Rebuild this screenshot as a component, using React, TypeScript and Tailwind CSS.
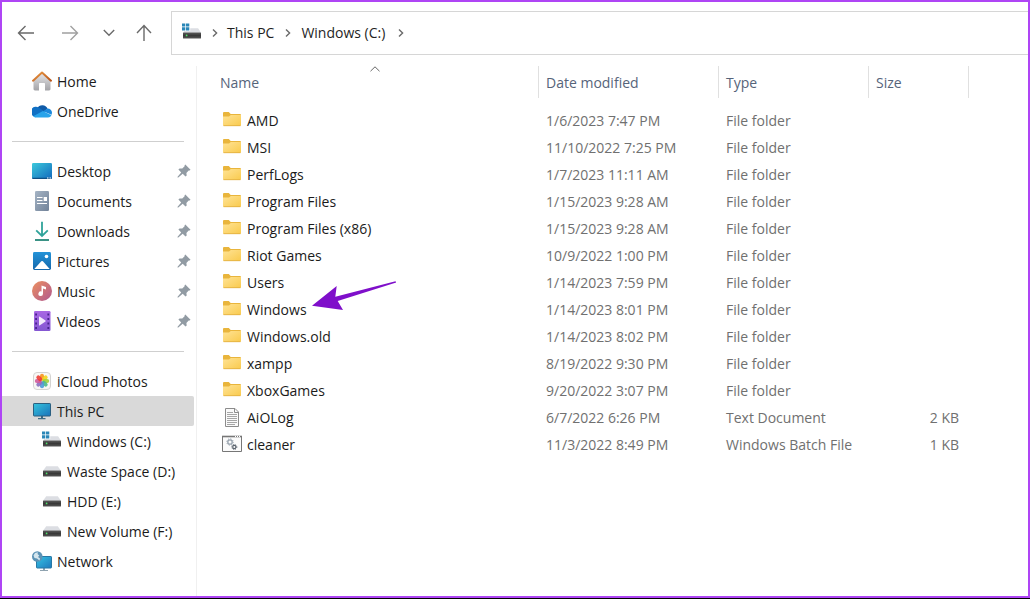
import { useState } from 'react'
import type { ReactNode } from 'react'

function DriveIcon({ system = false }: { system?: boolean }) {
  return (
    <svg width="20" height="20" viewBox="0 0 20 20" className="shrink-0">
      <defs>
        <linearGradient id="drive" x1="0" y1="0" x2="0" y2="1">
          <stop offset="0" stopColor="#5a5a5a" />
          <stop offset="0.5" stopColor="#383838" />
          <stop offset="1" stopColor="#565656" />
        </linearGradient>
      </defs>
      {system ? (
        <>
          <path d="M8.2 5.2h7.9l3 4.600H1L2.200 8h6z" fill="#dcdee3" />
          <path d="M0 .4h3.300v3.200H0zM4 .4h3.300v3.200H4zM0 4.300h3.300v3.200H0zM4 4.300h3.300v3.200H4z" fill="#2a87b8" />
        </>
      ) : (
        <path d="M4.200 5.200h11.600l3.200 4.600H1z" fill="#dcdee3" />
      )}
      <rect x="1" y="9.600" width="18" height="5.900" rx="0.500" fill="url(#drive)" />
      <circle cx="4.600" cy="12.400" r="0.900" fill="#4fe06a" />
    </svg>
  )
}

function HomeIcon() {
  return (
    <svg width="20" height="20" viewBox="0 0 20 20">
      <defs>
        <linearGradient id="house" x1="0" y1="0" x2="0" y2="1">
          <stop offset="0" stopColor="#e6e6e8" />
          <stop offset="1" stopColor="#a3a3a7" />
        </linearGradient>
        <linearGradient id="roof" x1="0" y1="0" x2="1" y2="1">
          <stop offset="0" stopColor="#eb9a45" />
          <stop offset="1" stopColor="#b85418" />
        </linearGradient>
      </defs>
      <path d="M1.500 9.300 10 2l8.500 7.300v8.500c0 .9-.5 1.700-1.500 1.700h-4V13c0-.6-.4-1-1-1H8c-.6 0-1 .4-1 1v6.500H3c-1 0-1.500-.8-1.500-1.700z" fill="url(#house)" />
      <path d="M1 9.700 10 1.500l9 8.200" fill="none" stroke="url(#roof)" strokeWidth="2" strokeLinecap="round" strokeLinejoin="round" />
    </svg>
  )
}

function OneDriveIcon() {
  return (
    <svg width="20" height="20" viewBox="0 0 20 20">
      <path d="M5.200 7.300A5.800 5.800 0 0 1 15.600 7.600L11 11.500z" fill="#0f5ba8" />
      <path d="M.8 14.800A4.200 4.200 0 0 1 6.900 6.700L13 10.800 3.800 16.300A4 4 0 0 1 .8 14.800z" fill="#1070c4" />
      <path d="M11.200 10.200l4.300-2.700c2.500 0 4.500 1.900 4.500 4.300l-.4 2z" fill="#1a88dc" />
      <path d="M1.200 15.200l9.700-5.200 8.600 4.200a3.900 3.900 0 0 1-3.600 2.200H4a3.900 3.900 0 0 1-2.800-1.200z" fill="#28a3ea" />
    </svg>
  )
}

function DesktopIcon() {
  return (
    <svg width="20" height="20" viewBox="0 0 20 20">
      <defs>
        <linearGradient id="desk" x1="0" y1="0" x2="1" y2="1">
          <stop offset="0" stopColor="#3cc9dc" />
          <stop offset="1" stopColor="#1269bd" />
        </linearGradient>
      </defs>
      <rect y="2" width="20" height="16" rx="1.200" fill="url(#desk)" />
      <path d="M.2 16.800h19.600v.2q0 1-1 1H1.200q-1 0-1-1z" fill="#0f4f83" />
      <path d="M15 17h1.500M17.500 17H19" stroke="#fff" />
    </svg>
  )
}

function DocumentsIcon() {
  return (
    <svg width="20" height="20" viewBox="0 0 20 20">
      <defs>
        <linearGradient id="docs" x1="0" y1="0" x2="1" y2="1">
          <stop offset="0" stopColor="#a5b4c5" />
          <stop offset="1" stopColor="#718298" />
        </linearGradient>
      </defs>
      <rect x="3" width="14" height="20" rx="1.300" fill="url(#docs)" />
      <path d="M5 6.500h5.500M5 9.500h5.500M5 12.500h10" stroke="#fff" strokeWidth="1.200" />
      <path d="M11.700 6H15v4h-3.300z" fill="#fff" />
    </svg>
  )
}

function DownloadsIcon() {
  return (
    <svg width="20" height="20" viewBox="0 0 20 20" fill="none" stroke="#2fa39a" strokeWidth="1.800">
      <path d="M10 .8v14M4.200 9.300 10 15l5.800-5.700" />
      <path d="M3 19h14" stroke="#248678" />
    </svg>
  )
}

function PicturesIcon() {
  return (
    <svg width="20" height="20" viewBox="0 0 20 20">
      <defs>
        <linearGradient id="pics" x1="0" y1="0" x2="0" y2="1">
          <stop offset="0" stopColor="#2493d8" />
          <stop offset="1" stopColor="#1467ab" />
        </linearGradient>
      </defs>
      <rect x="1" y="1" width="18" height="18" rx="1.400" fill="url(#pics)" />
      <circle cx="14.500" cy="5.500" r="1.800" fill="#fff" />
      <path d="M2.300 18 9.300 10.300q.8-.8 1.600 0L17.700 18z" fill="#fff" />
    </svg>
  )
}

function MusicIcon() {
  return (
    <svg width="20" height="20" viewBox="0 0 20 20">
      <defs>
        <linearGradient id="music" x1="0" y1="0" x2="1" y2="1">
          <stop offset="0" stopColor="#ec9060" />
          <stop offset="1" stopColor="#b0588f" />
        </linearGradient>
      </defs>
      <circle cx="10" cy="10" r="10" fill="url(#music)" />
      <path d="M9.500 4.500 14 6v2.500l-3-.9v5.200a2.300 2.300 0 1 1-1.500-2.200z" fill="#fff" />
    </svg>
  )
}

function VideosIcon() {
  return (
    <svg width="20" height="20" viewBox="0 0 20 20">
      <defs>
        <linearGradient id="video" x1="0" y1="0" x2="0" y2="1">
          <stop offset="0" stopColor="#a866e4" />
          <stop offset="1" stopColor="#8457d2" />
        </linearGradient>
      </defs>
      <rect x="2" width="16.500" height="20" rx="1.300" fill="url(#video)" />
      <path d="M4.100 2.500v16M16.300 2.500v16" stroke="#4a2390" strokeWidth="1.800" strokeDasharray="2 2.500" />
      <path d="M7 5.800v8.400q0 .5.500.3l6-4q.4-.5 0-.9l-6-4Q7 5.300 7 5.800z" fill="#f3eafc" />
    </svg>
  )
}

const petals = ['#f7941d', '#f2d21b', '#a5cf3a', '#4cb88c', '#4d9bd8', '#8a6fc0', '#cf5a9c', '#ee3d35']

function PhotosIcon() {
  return (
    <svg width="20" height="20" viewBox="0 0 20 20">
      <rect x="1.500" y="1.500" width="17" height="17" rx="3.500" fill="#f8f7f5" stroke="#d4d3d1" />
      {petals.map((color, i) => (
        <rect key={color} x="8" y="2.800" width="4" height="6.700" rx="2" fill={color} opacity="0.9" transform={`rotate(${i * 45} 10 10)`} />
      ))}
    </svg>
  )
}

function ComputerIcon() {
  return (
    <svg width="20" height="20" viewBox="0 0 20 20">
      <defs>
        <linearGradient id="screen" x1="0" y1="0" x2="1" y2="1">
          <stop offset="0" stopColor="#35c4dd" />
          <stop offset="1" stopColor="#1a72ba" />
        </linearGradient>
      </defs>
      <path d="M9 15h2v2h2.500v1.200H6V17h3z" fill="#3e6b84" />
      <rect x="1.500" y="2.500" width="17" height="12.500" rx="0.600" fill="url(#screen)" stroke="#2b5f80" />
    </svg>
  )
}

function NetworkIcon() {
  return (
    <svg width="20" height="20" viewBox="0 0 20 20">
      <defs>
        <linearGradient id="net" x1="0" y1="0" x2="1" y2="1">
          <stop offset="0" stopColor="#35c4e4" />
          <stop offset="1" stopColor="#2079bd" />
        </linearGradient>
      </defs>
      <path d="M11 16.500h2V19h3v1H8v-1h3z" fill="#8fa3b0" />
      <rect x="4.500" y="5.500" width="15" height="11.500" rx="0.600" fill="url(#net)" stroke="#2878a5" />
      <circle cx="5.300" cy="5.500" r="5.300" fill="#5d93b5" />
      <path d="M1.500 4.500 3 2l3-.8L5.500 3l1.800 1.500L6 6l2 1.500-.5 2L5 7.500 2.500 7z" fill="#d5e6ee" />
    </svg>
  )
}

function PinIcon() {
  return (
    <svg width="14" height="14" viewBox="0 0 14 14" fill="#919ba3">
      <path d="M8.300.5 13.500 5.700l-.8.9-1-.1-2.300 2.500.3 2.400-1.200 1.200-2.800-2.800-4.400 3.700-.8.100.1-.8 3.600-4.400L1.400 5.600l1.200-1.200 2.700.2 2.300-2.300V1.200z" />
    </svg>
  )
}

function FolderIcon() {
  return (
    <svg width="20" height="20" viewBox="0 1 20 20">
      <defs>
        <linearGradient id="folder" x1="0" y1="0" x2="1" y2="1">
          <stop offset="0" stopColor="#ffe395" />
          <stop offset="1" stopColor="#f9ca4d" />
        </linearGradient>
      </defs>
      <path d="M1 3q0-1 1-1h4.800l1.900 2H18q1 0 1 1v3H1z" fill="#e9b53c" />
      <path d="M1 6.500h6L8.800 5H19v10q0 1-1 1H2q-1 0-1-1z" fill="url(#folder)" />
      <path d="M1.500 15.700h17" stroke="#dfac3f" strokeWidth="0.800" />
    </svg>
  )
}

function TextFileIcon() {
  return (
    <svg width="20" height="20" viewBox="0 0 20 20" fill="none">
      <path d="M3.500.5h9.500l3.500 3.500v14.500h-13z" fill="#fafafa" stroke="#8c8c8c" />
      <path d="M12.500.5v4h4" stroke="#8c8c8c" />
      <path d="M5 4.500h6M5 6.500h10M5 8.500h10M5 10.500h10M5 12.500h10M5 14.500h10M5 16.500h8" stroke="#a6a6a6" />
    </svg>
  )
}

function BatchFileIcon() {
  return (
    <svg width="20" height="20" viewBox="0 1 20 20" fill="none">
      <path d="M.5 2.500h19v15H.5z" fill="#fbfbfb" stroke="#777" />
      <path d="M0 2.500h20" stroke="#777" strokeWidth="1.600" />
      <path d="M13 2.500h1M15 2.500h1M17 2.500h1" stroke="#fff" />
      <circle cx="8" cy="8" r="2.200" stroke="#98a3ae" strokeWidth="1.300" />
      <circle cx="8" cy="8" r="3.200" stroke="#98a3ae" strokeDasharray="1.200 1.300" />
      <circle cx="12.300" cy="13" r="1.600" stroke="#5d6670" strokeWidth="1.200" />
      <circle cx="12.300" cy="13" r="2.500" stroke="#5d6670" strokeDasharray="1 1" />
    </svg>
  )
}

function Crumb() {
  return (
    <svg width="6" height="10" viewBox="0 0 6 10" fill="none" stroke="#6a6a6a" strokeWidth="1.400" className="shrink-0">
      <path d="M1 1.500 4.600 5 1 8.500" />
    </svg>
  )
}

type Place = { name: string; icon: ReactNode; pinned?: boolean; nested?: boolean }

const groups: Place[][] = [
  [
    { name: 'Home', icon: <HomeIcon /> },
    { name: 'OneDrive', icon: <OneDriveIcon /> },
  ],
  [
    { name: 'Desktop', icon: <DesktopIcon />, pinned: true },
    { name: 'Documents', icon: <DocumentsIcon />, pinned: true },
    { name: 'Downloads', icon: <DownloadsIcon />, pinned: true },
    { name: 'Pictures', icon: <PicturesIcon />, pinned: true },
    { name: 'Music', icon: <MusicIcon />, pinned: true },
    { name: 'Videos', icon: <VideosIcon />, pinned: true },
  ],
  [
    { name: 'iCloud Photos', icon: <PhotosIcon /> },
    { name: 'This PC', icon: <ComputerIcon /> },
    { name: 'Windows (C:)', icon: <DriveIcon system />, nested: true },
    { name: 'Waste Space (D:)', icon: <DriveIcon />, nested: true },
    { name: 'HDD (E:)', icon: <DriveIcon />, nested: true },
    { name: 'New Volume (F:)', icon: <DriveIcon />, nested: true },
    { name: 'Network', icon: <NetworkIcon /> },
  ],
]

const files = [
  { name: 'AMD', date: '1/6/2023 7:47 PM', type: 'File folder', size: '' },
  { name: 'MSI', date: '11/10/2022 7:25 PM', type: 'File folder', size: '' },
  { name: 'PerfLogs', date: '1/7/2023 11:11 AM', type: 'File folder', size: '' },
  { name: 'Program Files', date: '1/15/2023 9:28 AM', type: 'File folder', size: '' },
  { name: 'Program Files (x86)', date: '1/15/2023 9:28 AM', type: 'File folder', size: '' },
  { name: 'Riot Games', date: '10/9/2022 1:00 PM', type: 'File folder', size: '' },
  { name: 'Users', date: '1/14/2023 7:59 PM', type: 'File folder', size: '' },
  { name: 'Windows', date: '1/14/2023 8:01 PM', type: 'File folder', size: '' },
  { name: 'Windows.old', date: '1/14/2023 8:02 PM', type: 'File folder', size: '' },
  { name: 'xampp', date: '8/19/2022 9:30 PM', type: 'File folder', size: '' },
  { name: 'XboxGames', date: '9/20/2022 3:07 PM', type: 'File folder', size: '' },
  { name: 'AiOLog', date: '6/7/2022 6:26 PM', type: 'Text Document', size: '2 KB' },
  { name: 'cleaner', date: '11/3/2022 8:49 PM', type: 'Windows Batch File', size: '1 KB' },
]

function FileIcon({ type }: { type: string }) {
  if (type === 'Text Document') return <TextFileIcon />
  if (type === 'Windows Batch File') return <BatchFileIcon />
  return <FolderIcon />
}

function Toolbar() {
  return (
    <header className="flex pt-[9px]">
      <div className="flex h-11 w-[169px] shrink-0 items-center pl-[2px] text-[#6a6a6a]">
        <button aria-label="Back" className="flex w-11 justify-center">
          <svg width="18" height="18" viewBox="0 0 18 18" fill="none" stroke="currentColor" strokeWidth="1.400"><path d="M17 9H2M8.500 2 1.500 9l7 7" /></svg>
        </button>
        <button aria-label="Forward" className="flex w-11 justify-center text-[#a0a0a0]">
          <svg width="18" height="18" viewBox="0 0 18 18" fill="none" stroke="currentColor" strokeWidth="1.400"><path d="M1 9h15M9.500 2l7 7-7 7" /></svg>
        </button>
        <button aria-label="Recent locations" className="flex w-[34px] justify-center">
          <svg width="12" height="8" viewBox="0 0 12 8" fill="none" stroke="currentColor" strokeWidth="1.400"><path d="M.8 1 6 6.200 11.200 1" /></svg>
        </button>
        <button aria-label="Up" className="flex w-9 justify-center">
          <svg width="18" height="18" viewBox="0 0 18 18" fill="none" stroke="currentColor" strokeWidth="1.400"><path d="M9 17V2M2 9l7-7.500L16 9" /></svg>
        </button>
      </div>
      <nav aria-label="Address" className="flex h-11 flex-1 items-center border-y border-l border-[#d6d6d6] pl-[10px] text-[#1f1f1f]">
        <DriveIcon system />
        <span className="flex w-[25px] justify-center"><Crumb /></span>
        <button>This PC</button>
        <span className="flex w-[27px] justify-center"><Crumb /></span>
        <button>Windows (C:)</button>
        <span className="flex w-8 justify-center"><Crumb /></span>
      </nav>
    </header>
  )
}

function Sidebar() {
  const [current, setCurrent] = useState('This PC')

  return (
    <nav aria-label="Places" className="w-[195px] shrink-0 border-r border-[#f0f0f0] pr-[2px] text-[#1b1b1b]">
      {groups.map((group, i) => (
        <div key={i}>
          {i > 0 && <hr className="mt-[15px] mr-[10px] mb-[14px] ml-[10px] h-px border-0 bg-[#cfcfcf]" />}
          <ul>
            {group.map((p) => (
              <li key={p.name}>
                <button
                  onClick={() => setCurrent(p.name)}
                  className={`flex h-[30px] w-full items-center gap-[5px] rounded-r-xs pr-[3px] whitespace-nowrap ${p.nested ? 'pl-10' : 'pl-[30px]'} ${p.name === current ? 'bg-[#d9d9d9]' : ''}`}
                >
                  <span className="w-5 shrink-0">{p.icon}</span>
                  <span className="pt-[2px]">{p.name}</span>
                  {p.pinned && <span className="ml-auto"><PinIcon /></span>}
                </button>
              </li>
            ))}
          </ul>
        </div>
      ))}
    </nav>
  )
}

function FileTable() {
  return (
    <main className="min-w-0 flex-1">
      <table className="w-[772px] table-fixed border-separate border-spacing-0 text-left whitespace-nowrap">
        <colgroup>
          <col className="w-[342px]" />
          <col className="w-[180px]" />
          <col className="w-[150px]" />
          <col className="w-[100px]" />
        </colgroup>
        <thead className="text-[#56647a]">
          <tr>
            {['Name', 'Date modified', 'Type', 'Size'].map((h) => (
              <th key={h} className={`p-0 pb-[9px] font-normal ${h === 'Name' ? 'pl-[14px]' : ''}`}>
                <button className={`relative flex h-8 w-full items-center border-r border-[#e0e0e0] pt-[2px] ${h === 'Name' ? 'pl-[9px]' : 'pl-[7px]'}`}>
                  {h}
                  {h === 'Name' && (
                    <svg width="10" height="6" viewBox="0 0 10 6" fill="none" stroke="#666" className="absolute top-0 left-1/2 -translate-x-1/2">
                      <path d="M.5 5.200 5 .8l4.500 4.400" />
                    </svg>
                  )}
                </button>
              </th>
            ))}
          </tr>
        </thead>
        <tbody className="text-[#707070]">
          {files.map((f) => (
            <tr key={f.name} className="h-[27px]">
              <td className="p-0 pl-[25px] text-[#1b1b1b]">
                <div className="flex items-center gap-[5px]">
                  <FileIcon type={f.type} />
                  <span className="relative">
                    {f.name}
                    {f.name === 'Windows' && (
                      <svg width="86" height="31" viewBox="0 0 86 31" className="absolute bottom-2 left-full ml-[5px]">
                        <path d="M0 24.700 24.700 5l-1.400 10.700L83.500.2l.7 1.400L25.700 20 31 29z" fill="#7f0fca" />
                      </svg>
                    )}
                  </span>
                </div>
              </td>
              <td className="p-0 pl-[7px]">{f.date}</td>
              <td className="p-0 pl-[7px]">{f.type}</td>
              <td className="p-0 pr-[10px] text-right">{f.size}</td>
            </tr>
          ))}
        </tbody>
      </table>
    </main>
  )
}

export default function App() {
  return (
    <div className="flex min-h-screen flex-col bg-black pb-px font-['Open_Sans',sans-serif] text-[14px] leading-5">
      <div className="flex flex-1 flex-col border-2 border-[#af45f5] bg-white">
        <Toolbar />
        <div className="flex flex-1 pt-[11px]">
          <Sidebar />
          <FileTable />
        </div>
      </div>
    </div>
  )
}
